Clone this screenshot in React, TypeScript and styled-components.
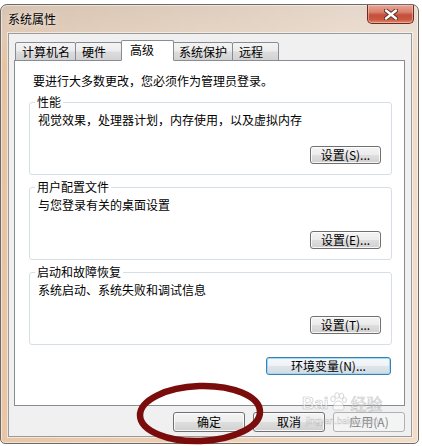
import React from "react";
import styled, { createGlobalStyle, css } from "styled-components";

const GlobalStyle = createGlobalStyle`
  html, body { margin: 0; padding: 0; background: #ffffff; }
  body {
    font-family: "Noto Sans CJK SC", "Noto Sans", sans-serif;
    font-size: 12px;
    color: #000;
  }
  * { box-sizing: border-box; }
`;

const Page = styled.div`
  position: relative;
  width: 422px;
  height: 446px;
  overflow: hidden;
  background: #fff;
  padding-top: 4px;
`;

const Window = styled.div`
  width: 419px;
  height: 440px;
  border: 1px solid #6d6a66;
  border-radius: 7px 7px 5px 5px;
  background:
    linear-gradient(90deg, rgba(255,255,255,0) 0%, rgba(255,255,255,0.2) 55%, rgba(255,255,255,0.4) 100%),
    linear-gradient(180deg, #d7c3b1 0px, #e0cab6 28px, #e6c4a3 60px, #e8c6a6 100%);
  box-shadow: inset 0 0 0 1px rgba(255,255,255,0.5);
  display: flex;
  flex-direction: column;
  padding: 0 6px 6px 7px;
`;

const TitleBar = styled.div`
  height: 28px;
  display: flex;
  align-items: center;
  justify-content: space-between;
  flex-shrink: 0;
`;

const Title = styled.div`
  font-size: 12px;
  line-height: 14px;
  color: #000;
  text-shadow: 0 0 6px rgba(255, 255, 255, 0.9);
`;

const CloseButton = styled.div`
  align-self: flex-start;
  width: 47px;
  height: 19px;
  margin-right: -2px;
  border: 1px solid #6e2a22;
  border-top: none;
  border-radius: 0 0 5px 5px;
  background: linear-gradient(180deg, #e9a595 0%, #d9806c 40%, #c4503b 55%, #c8583f 80%, #e08a6c 100%);
  box-shadow: inset 0 0 0 1px rgba(255, 220, 210, 0.45);
  display: flex;
  align-items: center;
  justify-content: center;
`;

const Client = styled.div`
  height: 404px;
  background: #f0f0f0;
  border: 1px solid #9a9a9a;
  box-shadow: 0 0 0 1px rgba(255, 255, 255, 0.55);
  padding-top: 6px;
  display: flex;
  flex-direction: column;
`;

const TabRow = styled.div`
  display: flex;
  align-items: flex-end;
  height: 21px;
  margin: 0 0 -1px 6px;
  position: relative;
  z-index: 1;
`;

const Tab = styled.div<{ $active?: boolean }>`
  height: 19px;
  min-width: 47px;
  padding: 0 5px 0 6px;
  margin-left: -1px;
  border: 1px solid #898c95;
  border-radius: 2px 2px 0 0;
  background: linear-gradient(180deg, #f4f4f4 0%, #ececec 45%, #dcdcdc 55%, #d2d2d2 100%);
  display: flex;
  align-items: center;
  line-height: 14px;
  white-space: nowrap;
  &:first-child { margin-left: 0; }
  ${(p) =>
    p.$active &&
    css`
      height: 21px;
      min-width: 53px;
      padding: 0 8px 2px;
      margin-right: -1px;
      background: #ffffff;
      border-bottom-color: #ffffff;
      position: relative;
      z-index: 2;
    `}
`;

const Panel = styled.div`
  margin-left: 5px;
  width: 391px;
  height: 346px;
  background: #ffffff;
  border: 1px solid #898c95;
  padding: 13px 12px 0 14px;
  display: flex;
  flex-direction: column;
`;

const Intro = styled.div`
  line-height: 14px;
  margin-left: 4px;
  white-space: nowrap;
`;

const Group = styled.fieldset`
  margin: 7px 0 0;
  padding: 0 10px 10px 8px;
  border: 1px solid #d5dfe5;
  border-radius: 3px;
  min-width: 0;
  & + & { margin-top: 5px; }
`;

const Legend = styled.legend`
  padding: 0 2px;
  margin-left: -3px;
  line-height: 14px;
`;

const GroupText = styled.div`
  margin-top: 4px;
  line-height: 14px;
  white-space: nowrap;
`;

const ButtonRow = styled.div<{ $gap?: number }>`
  display: flex;
  justify-content: flex-end;
  margin-top: ${(p) => p.$gap ?? 19}px;
`;

const EnvRow = styled.div`
  display: flex;
  justify-content: flex-end;
  margin: 12px 1px 0 0;
`;

type Size = "sm" | "wide" | "footer";
type Variant = "normal" | "default" | "disabled";

const Button = styled.button<{ $size?: Size; $variant?: Variant }>`
  width: ${(p) => (p.$size === "wide" ? 125 : p.$size === "footer" ? 72 : 71)}px;
  height: ${(p) => (p.$size === "footer" ? 20 : 18)}px;
  padding: 0;
  font-family: inherit;
  font-size: 12px;
  line-height: 14px;
  color: #000;
  border: 1px solid #707070;
  border-radius: 3px;
  background: linear-gradient(180deg, #f4f4f4 0%, #ececec 48%, #dedede 52%, #d0d0d0 100%);
  box-shadow: inset 0 0 0 1px rgba(255, 255, 255, 0.8);
  white-space: nowrap;
  ${(p) =>
    p.$variant === "default" &&
    css`
      border-color: #3c7fb1;
      box-shadow: inset 0 0 0 1px #9fd9f6;
      background: linear-gradient(180deg, #f6f9fb 0%, #eef2f5 48%, #dfe5ea 52%, #d4dbe0 100%);
    `}
  ${(p) =>
    p.$variant === "disabled" &&
    css`
      border-color: #adb2b5;
      background: #f4f4f4;
      box-shadow: none;
      color: #838383;
    `}
`;

const Footer = styled.div`
  display: flex;
  justify-content: flex-end;
  gap: 8px;
  padding-right: 6px;
  margin-top: 6px;
`;

const Oval = styled.svg`
  position: absolute;
  left: 0;
  top: 0;
  pointer-events: none;
`;

const Watermark = styled.div`
  position: absolute;
  left: 302px;
  top: 392px;
  display: flex;
  flex-direction: column;
  align-items: flex-start;
  pointer-events: none;
  opacity: 0.55;
`;

const WmTop = styled.div`
  display: flex;
  align-items: flex-end;
  gap: 1px;
`;

const WmBig = styled.span`
  font-family: "Liberation Sans", Arial, sans-serif;
  font-weight: bold;
  font-size: 17px;
  line-height: 17px;
  color: #ffffff;
  -webkit-text-stroke: 0.6px #9a9a9a;
`;

const WmCn = styled.span`
  font-size: 16px;
  line-height: 18px;
  color: #ffffff;
  -webkit-text-stroke: 0.6px #9a9a9a;
  margin-left: 2px;
`;

const WmSmall = styled.span`
  font-family: "Liberation Sans", Arial, sans-serif;
  font-size: 9px;
  line-height: 10px;
  margin: 4px 0 0 4px;
  color: #ffffff;
  -webkit-text-stroke: 0.4px #a0a0a0;
`;

const tabs = ["计算机名", "硬件", "高级", "系统保护", "远程"];

const groups = [
  { title: "性能", text: "视觉效果，处理器计划，内存使用，以及虚拟内存", button: "设置(S)..." },
  { title: "用户配置文件", text: "与您登录有关的桌面设置", button: "设置(E)..." },
  { title: "启动和故障恢复", text: "系统启动、系统失败和调试信息", button: "设置(T)..." },
];

export default function App() {
  return (
    <>
      <GlobalStyle />
      <Page>
        <Window>
          <TitleBar>
            <Title>系统属性</Title>
            <CloseButton>
              <svg width="14" height="11" viewBox="0 0 14 11">
                <path
                  d="M2 1.5 L12 9.5 M12 1.5 L2 9.5"
                  stroke="#5a2a24"
                  strokeWidth="4.2"
                  strokeLinecap="round"
                />
                <path
                  d="M2 1.5 L12 9.5 M12 1.5 L2 9.5"
                  stroke="#ffffff"
                  strokeWidth="2.4"
                  strokeLinecap="round"
                />
              </svg>
            </CloseButton>
          </TitleBar>
          <Client>
            <TabRow>
              {tabs.map((t) => (
                <Tab key={t} $active={t === "高级"}>
                  {t}
                </Tab>
              ))}
            </TabRow>
            <Panel>
              <Intro>要进行大多数更改，您必须作为管理员登录。</Intro>
              {groups.map((g) => (
                <Group key={g.title}>
                  <Legend>{g.title}</Legend>
                  <GroupText>{g.text}</GroupText>
                  <ButtonRow>
                    <Button $size="sm">{g.button}</Button>
                  </ButtonRow>
                </Group>
              ))}
              <EnvRow>
                <Button $size="wide" $variant="default">
                  环境变量(N)...
                </Button>
              </EnvRow>
            </Panel>
            <Footer>
              <Button $size="footer">确定</Button>
              <Button $size="footer">取消</Button>
              <Button $size="footer" $variant="disabled">
                应用(A)
              </Button>
            </Footer>
          </Client>
        </Window>
        <Watermark>
          <WmTop>
            <WmBig>Bai</WmBig>
            <svg width="18" height="20" viewBox="0 0 18 20">
              <g fill="#ffffff" stroke="#9a9a9a" strokeWidth="0.7">
                <ellipse cx="4" cy="7" rx="2.2" ry="2.8" />
                <ellipse cx="8" cy="3.5" rx="2.2" ry="2.8" />
                <ellipse cx="12.5" cy="4" rx="2.2" ry="2.8" />
                <ellipse cx="15.5" cy="8" rx="2" ry="2.6" />
                <path d="M9.5 9 C6 9 3.5 14 4 16.5 C4.5 19 8 18 9.5 18 C11 18 14.5 19 15 16.5 C15.5 14 13 9 9.5 9 Z" />
              </g>
            </svg>
            <WmCn>经验</WmCn>
          </WmTop>
          <WmSmall>jingyan.baidu.com</WmSmall>
        </Watermark>
        <Oval width="422" height="446" viewBox="0 0 422 446">
          <ellipse
            cx="200"
            cy="413.5"
            rx="60"
            ry="27.5"
            fill="none"
            stroke="#7b0c0c"
            strokeWidth="6.5"
            transform="rotate(-2 200 413.5)"
          />
        </Oval>
      </Page>
    </>
  );
}
